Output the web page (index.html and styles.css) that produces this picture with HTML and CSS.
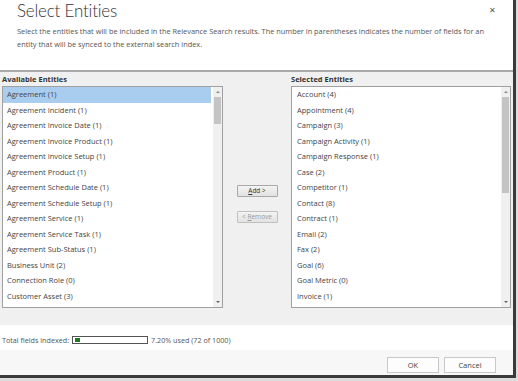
FILE: index.html
```html
<!DOCTYPE html>
<html>
<head>
<meta charset="utf-8">
<link rel="stylesheet" href="styles.css">
</head>
<body>
<div class="dialog">
  <header class="header">
    <h1 class="title">Select Entities</h1>
    <p class="desc">Select the entities that will be included in the Relevance Search results. The number in parentheses indicates the number of fields for an entity that will be synced to the external search index.</p>
    <span class="close">&#x2715;</span>
  </header>
  <section class="panel">
    <div class="col col-left">
      <div class="label">Available Entities</div>
      <div class="listbox">
        <ul class="items">
          <li class="selected">Agreement (1)</li>
          <li>Agreement Incident (1)</li>
          <li>Agreement Invoice Date (1)</li>
          <li>Agreement Invoice Product (1)</li>
          <li>Agreement Invoice Setup (1)</li>
          <li>Agreement Product (1)</li>
          <li>Agreement Schedule Date (1)</li>
          <li>Agreement Schedule Setup (1)</li>
          <li>Agreement Service (1)</li>
          <li>Agreement Service Task (1)</li>
          <li>Agreement Sub-Status (1)</li>
          <li>Business Unit (2)</li>
          <li>Connection Role (0)</li>
          <li>Customer Asset (3)</li>
          <li class="partial">Field Service Setting (1)</li>
        </ul>
        <div class="scrollbar">
          <span class="arrow up"></span>
          <div class="track"><div class="thumb thumb-left"></div></div>
          <span class="arrow down"></span>
        </div>
      </div>
    </div>
    <div class="middle">
      <button class="btn"><u>A</u>dd &gt;</button>
      <button class="btn disabled">&lt; <u>R</u>emove</button>
    </div>
    <div class="col col-right">
      <div class="label">Selected Entities</div>
      <div class="listbox">
        <ul class="items items-right">
          <li>Account (4)</li>
          <li>Appointment (4)</li>
          <li>Campaign (3)</li>
          <li>Campaign Activity (1)</li>
          <li>Campaign Response (1)</li>
          <li>Case (2)</li>
          <li>Competitor (1)</li>
          <li>Contact (8)</li>
          <li>Contract (1)</li>
          <li>Email (2)</li>
          <li>Fax (2)</li>
          <li>Goal (6)</li>
          <li>Goal Metric (0)</li>
          <li>Invoice (1)</li>
          <li class="partial">Lead (7)</li>
        </ul>
        <div class="scrollbar">
          <span class="arrow up"></span>
          <div class="track"><div class="thumb thumb-right"></div></div>
          <span class="arrow down"></span>
        </div>
      </div>
    </div>
  </section>
  <section class="info">
    <span>Total fields indexed:</span>
    <div class="progress"><div class="fill" style="width:7.2%"></div></div>
    <span>7.20% used (72 of 1000)</span>
  </section>
  <footer class="footer">
    <button class="fbtn">OK</button>
    <button class="fbtn">Cancel</button>
  </footer>
</div>
</body>
</html>
```
FILE: styles.css
```css
html, body {
  margin: 0;
  padding: 0;
}
body {
  width: 518px;
  height: 381px;
  overflow: hidden;
  background: #dcdcdc;
  font-family: "Open Sans", "Noto Sans", sans-serif;
  color: #444;
}
.dialog {
  width: 513px;
  height: 375px;
  background: #fff;
  border-right: 3px solid #3a3a3a;
  border-bottom: 3px solid #3a3a3a;
  display: flex;
  flex-direction: column;
}
.header {
  position: relative;
  height: 70px;
  padding-left: 17px;
  box-sizing: border-box;
}
.title {
  margin: 0;
  font-family: Lato, "Open Sans", sans-serif;
  font-weight: 300;
  font-size: 17px;
  letter-spacing: -0.2px;
  line-height: 22px;
  color: #333;
  padding-top: 0;
}
.desc {
  margin: 3px 0 0;
  width: 482px;
  font-size: 7.4px;
  line-height: 13px;
  color: #555;
}
.close {
  position: absolute;
  right: 17px;
  top: 4px;
  font-size: 8px;
  color: #555;
}
.panel {
  height: 255px;
  box-sizing: border-box;
  border-top: 2px solid #a9a9a9;
  background: #f0f0f0;
  display: flex;
  padding-left: 2px;
}
.col {
  display: flex;
  flex-direction: column;
}
.col-left { width: 221px; }
.col-right { width: 220px; }
.label {
  height: 14px;
  line-height: 14px;
  font-size: 7.5px;
  font-weight: 700;
  color: #333;
}
.listbox {
  height: 222px;
  box-sizing: border-box;
  border: 1px solid #a0a0a0;
  background: #fff;
  display: flex;
}
.items {
  flex: 1;
  margin: 0;
  padding: 0;
  list-style: none;
  overflow: hidden;
  min-width: 0;
}
.items li {
  height: 15.5px;
  line-height: 14px;
  padding-left: 4px;
  font-size: 7.5px;
  white-space: nowrap;
  color: #444;
}
.items li.partial { height: 6px; overflow: hidden; }
.items-right li { padding-left: 5px; }
.items li.selected {
  background: #a9cdef;
  margin-right: 2px;
}
.scrollbar {
  width: 9px;
  background: #f0f0f0;
  display: flex;
  flex-direction: column;
  align-items: center;
}
.arrow {
  width: 0;
  height: 0;
  border-left: 2px solid transparent;
  border-right: 2px solid transparent;
  margin: 4px 0;
}
.arrow.up { border-bottom: 2px solid #888; }
.arrow.down { border-top: 2px solid #606060; }
.track {
  flex: 1;
  width: 100%;
}
.thumb {
  margin: 0 1px;
  background: #c4c4c4;
}
.thumb-left { height: 27px; }
.thumb-right { height: 96px; }
.middle {
  width: 68px;
  display: flex;
  flex-direction: column;
  align-items: center;
  gap: 14px;
  padding-top: 113px;
  box-sizing: border-box;
}
.btn {
  width: 41px;
  height: 12px;
  padding: 0;
  font-family: inherit;
  font-size: 6.5px;
  line-height: 10px;
  color: #333;
  background: linear-gradient(#f4f4f4, #e2e2e2);
  border: 1px solid #a8a8a8;
  border-radius: 1px;
}
.btn.disabled { color: #999; border-color: #c0c0c0; }
.info {
  height: 25px;
  box-sizing: border-box;
  display: flex;
  align-items: center;
  gap: 3px;
  padding: 4px 0 0 2px;
  font-size: 7.2px;
  color: #555;
}
.progress {
  width: 70px;
  height: 4px;
  border: 1px solid #555;
  padding: 1px 2px;
  box-sizing: content-box;
  background: #fff;
}
.fill {
  height: 100%;
  background: #1e7d24;
  min-width: 5px;
}
.footer {
  flex: 1;
  background: #f7f7f7;
  display: flex;
  justify-content: flex-end;
  align-items: flex-start;
  gap: 5px;
  padding: 7px 17px 0 0;
}
.fbtn {
  width: 52px;
  height: 16px;
  padding: 0;
  font-family: inherit;
  font-size: 7.5px;
  color: #444;
  background: #fdfdfd;
  border: 1px solid #c8c8c8;
}
```
